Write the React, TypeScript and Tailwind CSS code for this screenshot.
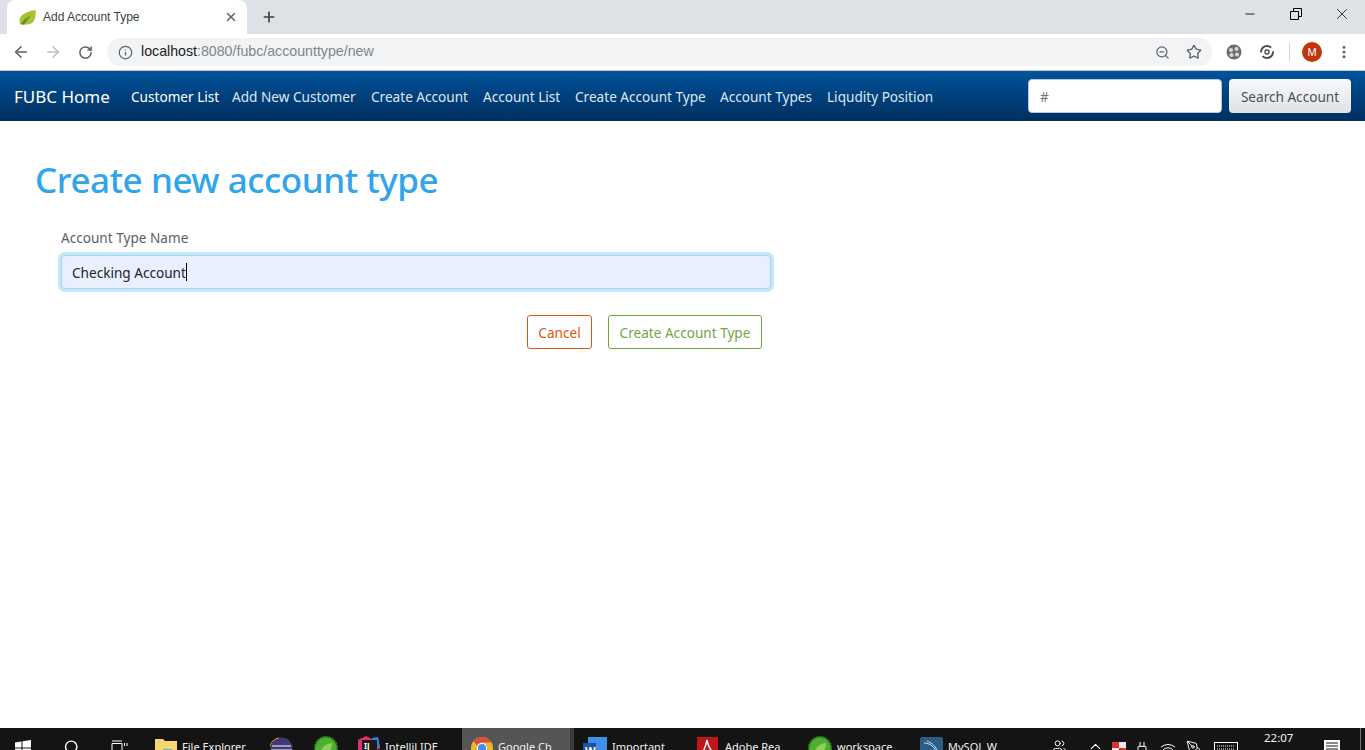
import React from 'react'
import { ArrowLeft, ArrowRight, RotateCw, Info, ZoomOut, Star, X, Plus, Minus, MoreVertical, ChevronUp, Wifi, Plug, Users, PenTool, Search } from 'lucide-react'

const navLinks = [
  { label: 'Customer List', w: 'w-[101px]', active: true },
  { label: 'Add New Customer', w: 'w-[139px]' },
  { label: 'Create Account', w: 'w-[112px]' },
  { label: 'Account List', w: 'w-[92px]' },
  { label: 'Create Account Type', w: 'w-[145px]' },
  { label: 'Account Types', w: 'w-[107px]' },
  { label: 'Liqudity Position', w: 'w-[120px]' },
]

function Leaf({ size = 17 }: { size?: number }) {
  return (
    <svg width={size} height={size} viewBox="0 0 16 16">
      <path d="M1 14C-1 8 3 3 15.500 1c1 8-2 13.500-8 13.500-2.500 0-5 0-6.500-.5z" fill="#a5c431" />
      <path d="M1.500 14.500c2-4 5-6.500 9.500-8.500-2.500 3-4 6-6 8.500z" fill="#6f8f20" />
    </svg>
  )
}

function SpringBall() {
  return (
    <svg width="24" height="24" viewBox="0 0 24 24">
      <circle cx="12" cy="12" r="11" fill="#4caf2f" strokeDasharray="2 1" stroke="#2f8a1f" strokeWidth="2" />
      <path d="M7 17c0-6 5-9 11-10 0 6-3 11-8 11-1 0-2 0-3-1z" fill="#8fd05a" />
    </svg>
  )
}

// iconPad sets how far the icon starts below the taskbar top, the label stays on one line
function TaskItem({ icon, iconPad, label, className = '' }: { icon: React.ReactNode; iconPad: string; label?: string; className?: string }) {
  return (
    <div className={`flex shrink-0 items-start gap-[5px] ${className}`}>
      <div className={iconPad}>{icon}</div>
      {label && <span className="pt-[10px] text-[11px] leading-[18px] text-[#f2f2f2] whitespace-nowrap">{label}</span>}
    </div>
  )
}

export default function App() {
  return (
    <div className="h-[750px] w-[1365px] flex flex-col overflow-hidden bg-white font-['Noto_Sans','Open_Sans',sans-serif]">
      {/* tab strip */}
      <div className="h-[34px] shrink-0 bg-[#dee1e6] flex items-end pl-[7px]">
        <div className="h-[34px] w-[240px] bg-white rounded-t-lg flex items-center pl-[12px] pr-[9px]">
          <Leaf />
          <span className="ml-[7px] text-[12px] text-[#3c4043] font-['Liberation_Sans',sans-serif]">Add Account Type</span>
          <X className="ml-auto text-[#5f6368]" size={14} strokeWidth={2.5} />
        </div>
        <Plus className="ml-[14px] mb-[9px] text-[#3c4043]" size={16} strokeWidth={2.5} />
        <div className="ml-auto flex items-center h-[34px] pb-[6px] text-[#000000]">
          <Minus size={14} strokeWidth={1.5} className="mr-[33px]" />
          <svg width="12" height="12" viewBox="0 0 12 12" fill="none" stroke="currentColor" className="mr-[31px]">
            <path d="M0.5 3.5h8v8h-8zM3.5 3.5v-3h8v8h-3" />
          </svg>
          <X size={18} strokeWidth={1} className="mr-[14px]" />
        </div>
      </div>

      {/* toolbar */}
      <div className="h-[37px] shrink-0 bg-white border-b border-[#c4c8cc] flex items-center pl-[12px]">
        <ArrowLeft size={18} className="text-[#5f6368]" strokeWidth={2.2} />
        <ArrowRight size={18} className="ml-[14px] text-[#bdc1c6]" strokeWidth={2.2} />
        <RotateCw size={15} className="ml-[16px] text-[#5f6368]" strokeWidth={2.4} />
        <div className="ml-[14px] h-[28px] w-[1105px] rounded-full bg-[#f1f3f4] flex items-center pl-[11px] pr-[10px]">
          <Info size={15} className="text-[#5f6368]" strokeWidth={2} />
          <span className="ml-[8px] text-[14.2px] font-['Liberation_Sans',sans-serif] text-[#80868b]">
            <span className="text-[#202124]">localhost</span>:8080/fubc/accounttype/new
          </span>
          <ZoomOut size={15} className="ml-auto text-[#5f6368]" strokeWidth={2} />
          <Star size={16} className="ml-[16px] text-[#5f6368]" strokeWidth={2} />
        </div>
        <svg width="16" height="16" viewBox="0 0 16 16" className="ml-[14px]">
          <circle cx="8" cy="8" r="7.5" fill="#6b6f72" />
          <circle cx="5" cy="6" r="2" fill="#d8d8d8" />
          <circle cx="10.5" cy="5" r="2" fill="#d8d8d8" />
          <circle cx="5.5" cy="11" r="2" fill="#d8d8d8" />
          <circle cx="11" cy="10.5" r="2" fill="#d8d8d8" />
        </svg>
        <svg width="16" height="16" viewBox="0 0 16 16" fill="none" stroke="#4a4d50" strokeWidth="2" className="ml-[17px]">
          <circle cx="8" cy="8" r="6" strokeDasharray="14 4" />
          <circle cx="8" cy="8" r="2" strokeWidth="1.4" />
        </svg>
        <div className="ml-[14px] h-[18px] w-px bg-[#d5d7da]" />
        <div className="ml-[12px] h-[20px] w-[20px] rounded-full bg-[#bf360c] text-white text-[11px] flex items-center justify-center font-['Liberation_Sans',sans-serif]">M</div>
        <MoreVertical size={16} className="ml-[14px] text-[#5f6368]" strokeWidth={2.5} />
      </div>

      {/* navbar */}
      <nav className="h-[50px] shrink-0 bg-gradient-to-b from-[#00539c] to-[#002f5f] flex items-center pl-[14px] pr-[14px]">
        <span className="text-[17px] text-white w-[117px] whitespace-nowrap pt-[1px]">FUBC Home</span>
        {navLinks.map(link => (
          <a key={link.label} className={`${link.w} shrink-0 text-[13.6px] whitespace-nowrap pt-[2px] ${link.active ? 'text-white' : 'text-[#dfe7f0]'}`}>
            {link.label}
          </a>
        ))}
        <div className="ml-auto flex items-center gap-[7px]">
          <input
            readOnly
            placeholder="#"
            className="h-[34px] w-[194px] rounded-[4px] bg-white border border-[#b9c7d6] pl-[11px] pt-[1px] text-[13.6px] placeholder:text-[#6c757d] outline-none"
          />
          <button className="h-[34px] w-[122px] rounded-[4px] bg-gradient-to-b from-[#f8f9fa] to-[#dfe2e6] text-[13.6px] text-[#49525a] pt-[2px]">
            Search Account
          </button>
        </div>
      </nav>

      {/* page */}
      <main className="flex-1 pt-[35px] pl-[35px]">
        <h1 className="text-[35px] leading-[48px] font-medium tracking-[-0.45px] text-[#31a4ea] whitespace-nowrap">Create new account type</h1>
        <form className="mt-[24px] ml-[26px] w-[711px]">
          <label className="block text-[13.6px] leading-[20px] text-[#5a5f66]">Account Type Name</label>
          <div className="mt-[7px] h-[34px] w-[710px] rounded-[4px] bg-[#e8f0fe] border border-[#9fd5f5] ring-[3px] ring-[#c6e6fa] pl-[10px] flex items-center text-[13.6px] text-[#212529]">
            <span className="pt-[2px]">Checking Account</span>
            <span className="h-[18px] w-px bg-black" />
          </div>
          <div className="mt-[26px] flex justify-end gap-[16px] pr-[10px]">
            <button type="button" className="h-[34px] w-[65px] rounded-[3px] border border-[#e0570f] pt-[2px] text-[13.6px] text-[#e0570f]">Cancel</button>
            <button type="button" className="h-[34px] w-[154px] rounded-[3px] border border-[#6fa83a] pt-[2px] text-[13.6px] text-[#74a53f]">Create Account Type</button>
          </div>
        </form>
      </main>

      {/* taskbar, cut off by the bottom of the window */}
      <footer className="h-[22px] shrink-0 bg-[#141414] flex items-start overflow-hidden">
        <TaskItem className="ml-[15px]" iconPad="pt-[12px]" icon={
          <svg width="16" height="16" viewBox="0 0 16 16" fill="#fff"><path d="M0 2.500l6.500-1V7.500H0zM7.500 1.300L16 0v7.500H7.500zM0 8.500h6.500v6L0 13.500zM7.500 8.500H16V16l-8.500-1.300z" /></svg>
        } />
        <TaskItem className="ml-[31px]" iconPad="pt-[11px]" icon={<Search size={17} className="text-white -scale-x-100" strokeWidth={2} />} />
        <TaskItem className="ml-[32px]" iconPad="pt-[12px]" icon={
          <svg width="17" height="16" viewBox="0 0 17 16" fill="none" stroke="#fff"><path d="M1 3.500h10v9H1zM1 1h10M1 15h10M13.500 3v3M16 3v3" /></svg>
        } />
        <TaskItem className="ml-[27px] w-[115px]" iconPad="pt-[11px]" label="File Explorer" icon={
          <svg width="22" height="18" viewBox="0 0 22 18"><path d="M0 0h8l2 2h12v16H0z" fill="#f5d76e" /><path d="M8 10h9v8H8z" fill="#4db2e8" /></svg>
        } />
        <TaskItem iconPad="pt-[9px]" icon={
          <svg width="23" height="23" viewBox="0 0 23 23"><circle cx="11.500" cy="11.500" r="11" fill="#3f3a7a" /><path d="M2 9h19M1 13h21M2 17h19" stroke="#fff" /><path d="M9 1a11 11 0 0 0-3 21" stroke="#f7941e" fill="none" /></svg>
        } />
        <TaskItem className="ml-[21px]" iconPad="pt-[8px]" icon={<SpringBall />} />
        <TaskItem className="ml-[20px] w-[104px]" iconPad="pt-[8px]" label="IntelliJ IDE" icon={
          <svg width="22" height="22" viewBox="0 0 22 22"><path d="M0 4l8-4 6 3 6-2 2 12-22 3z" fill="#e0336d" /><path d="M14 2l6-1 2 10-8 2z" fill="#2e7fe8" /><rect x="4" y="4" width="15" height="18" fill="#1b1b1b" /><text x="6" y="13" fontSize="8" fill="#fff" fontWeight="700">IJ</text></svg>
        } />
        <TaskItem className="w-[112px] h-[22px] bg-[#555555] pl-[9px] border-r-4 border-[#3a3a3a]" iconPad="pt-[9px]" label="Google Ch" icon={
          <svg width="22" height="22" viewBox="0 0 22 22"><circle cx="11" cy="11" r="11" fill="#e8b92e" /><path d="M11 0a11 11 0 0 1 9.500 5.500H11a5.500 5.500 0 0 0-5 3L2.500 4A11 11 0 0 1 11 0z" fill="#dd4b3e" /><circle cx="11" cy="11" r="5" fill="#fff" /><circle cx="11" cy="11" r="4" fill="#4a8af4" /></svg>
        } />
        <TaskItem className="ml-[9px] w-[114px]" iconPad="pt-[9px]" label="Important" icon={
          <svg width="24" height="22" viewBox="0 0 24 22"><rect x="5" y="0" width="19" height="22" fill="#3f8fe8" /><rect x="0" y="6" width="13" height="16" fill="#1f4fa8" /><text x="2" y="18" fontSize="11" fontWeight="700" fill="#fff">W</text></svg>
        } />
        <TaskItem className="w-[111px] gap-[7px]" iconPad="pt-[9px]" label="Adobe Rea" icon={
          <svg width="21" height="22" viewBox="0 0 21 22"><rect width="21" height="22" fill="#c4141b" /><path d="M10 3c1 5 2 9 6 12M10 3C9 9 7 13 5 17" stroke="#fff" strokeWidth="1.500" fill="none" /></svg>
        } />
        <TaskItem className="w-[112px]" iconPad="pt-[8px]" label="workspace" icon={<SpringBall />} />
        <TaskItem className="w-[110px]" iconPad="pt-[9px]" label="MySQL W" icon={
          <svg width="23" height="22" viewBox="0 0 23 22"><rect width="23" height="22" rx="2" fill="#2a5f85" /><path d="M4 6c6 0 11 4 14 12M7 4c4 2 7 3 10 9" stroke="#d5e4ee" fill="none" /></svg>
        } />
        <div className="ml-auto mr-[4px] h-[22px] flex items-start border-r border-[#777] pr-[20px] text-white">
          <TaskItem iconPad="pt-[11px]" icon={<Users size={15} strokeWidth={1.5} />} />
          <TaskItem className="ml-[20px]" iconPad="pt-[10px]" icon={<ChevronUp size={17} strokeWidth={1.5} />} />
          <TaskItem className="ml-[8px]" iconPad="pt-[13px]" icon={
            <svg width="14" height="15" viewBox="0 0 14 15"><path d="M0 1h14v7c0 4-4 6-7 7-3-1-7-3-7-7z" fill="#e8e8e8" /><path d="M0 1h7v6H0zM7 7h7c0 4-4 6-7 8z" fill="#d9342b" /></svg>
          } />
          <TaskItem className="ml-[8px]" iconPad="pt-[13px]" icon={<Plug size={16} strokeWidth={1.5} />} />
          <TaskItem className="ml-[10px]" iconPad="pt-[13px]" icon={<Wifi size={16} strokeWidth={1.5} />} />
          <TaskItem className="ml-[10px]" iconPad="pt-[12px]" icon={<PenTool size={15} strokeWidth={1.5} />} />
          <TaskItem className="ml-[13px]" iconPad="pt-[14px]" icon={
            <svg width="24" height="14" viewBox="0 0 24 14" fill="none" stroke="#fff"><rect x="0.500" y="0.500" width="23" height="13" /><path d="M3 4h18M3 7h18" strokeDasharray="1 1" /></svg>
          } />
          <span className="ml-[26px] mt-[1px] text-[11.5px] leading-[18px] w-[27px] text-[#f2f2f2] whitespace-nowrap">22:07</span>
          <TaskItem className="ml-[33px]" iconPad="pt-[12px]" icon={
            <svg width="16" height="14" viewBox="0 0 16 14"><rect width="16" height="14" fill="#fff" /><path d="M2 3h12M2 6h12M2 9h12" stroke="#141414" /></svg>
          } />
        </div>
      </footer>
    </div>
  )
}
